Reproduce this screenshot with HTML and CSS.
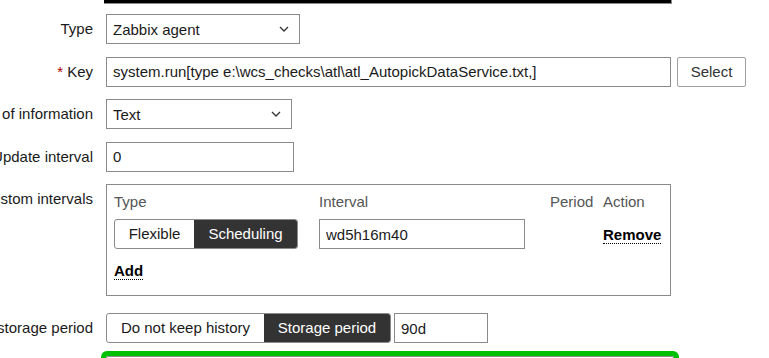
FILE: index.html
```html
<!DOCTYPE html>
<html lang="en">
<head>
    <meta charset="UTF-8">
    <meta name="viewport" content="width=device-width, initial-scale=1.0">
    <title>Item</title>
    <link rel="stylesheet" href="styles.css">
</head>
<body>
    <div class="top-bar"></div>

    <form class="item-form">
        <div class="form-row">
            <label class="form-label">Type</label>
            <div class="select select-type">
                <span>Zabbix agent</span>
                <svg class="chevron" width="10" height="6" viewBox="0 0 10 6"><polyline points="1,1 5,5 9,1" fill="none" stroke="#333" stroke-width="1.3"/></svg>
            </div>
        </div>

        <div class="form-row">
            <label class="form-label"><span class="required">*</span>&nbsp;Key</label>
            <input type="text" class="text-input key-input" value="system.run[type e:\wcs_checks\atl\atl_AutopickDataService.txt,]">
            <button type="button" class="btn-alt">Select</button>
        </div>

        <div class="form-row">
            <label class="form-label">Type of information</label>
            <div class="select select-info">
                <span>Text</span>
                <svg class="chevron" width="10" height="6" viewBox="0 0 10 6"><polyline points="1,1 5,5 9,1" fill="none" stroke="#333" stroke-width="1.3"/></svg>
            </div>
        </div>

        <div class="form-row">
            <label class="form-label">Update interval</label>
            <input type="text" class="text-input delay-input" value="0">
        </div>

        <div class="form-row">
            <label class="form-label">Custom intervals</label>
            <div class="intervals-box">
                <div class="intervals-grid">
                    <div class="col-head">Type</div>
                    <div class="col-head">Interval</div>
                    <div class="col-head">Period</div>
                    <div class="col-head">Action</div>

                    <div class="radio-seg">
                        <span class="seg seg-flex">Flexible</span>
                        <span class="seg seg-sched checked">Scheduling</span>
                    </div>
                    <input type="text" class="text-input interval-input" value="wd5h16m40">
                    <div></div>
                    <div class="cell-action"><a class="link-action">Remove</a></div>
                </div>
                <div class="add-row"><a class="link-action">Add</a></div>
            </div>
        </div>

        <div class="form-row storage-row">
            <label class="form-label">History storage period</label>
            <div class="radio-seg">
                <span class="seg seg-nokeep">Do not keep history</span>
                <span class="seg seg-period checked">Storage period</span>
            </div>
            <input type="text" class="text-input history-input" value="90d">
        </div>
    </form>

    <div class="focused-box"></div>
</body>
</html>
```

FILE: styles.css
```css
body {
    margin: 0;
    font-family: "Liberation Sans", Arial, sans-serif;
    font-size: 15px;
    color: #1a1a1a;
    background-color: #fff;
    overflow: hidden;
    height: 358px;
}

.top-bar {
    margin-left: 104px;
    width: 567px;
    height: 3px;
    background-color: #000;
    border-bottom: 1px solid #8a8a8a;
    border-right: 1px solid #8a8a8a;
}

.item-form {
    margin-top: 10px;
}

.form-row {
    display: flex;
    align-items: flex-start;
    margin-bottom: 12.5px;
}

.form-label {
    flex: 0 0 93px;
    width: 93px;
    min-width: 0;
    margin-right: 13px;
    display: flex;
    justify-content: flex-end;
    white-space: nowrap;
    height: 30px;
    line-height: 30px;
}

.required {
    color: #a00;
}

.select,
.text-input {
    box-sizing: border-box;
    height: 30px;
    border: 1px solid #8a8a8a;
    background-color: #fff;
    font-family: inherit;
    font-size: 15px;
    color: #1a1a1a;
}

.select {
    display: flex;
    align-items: center;
    justify-content: space-between;
    padding: 0 10px 0 6px;
}

.chevron {
    display: block;
}

.select-type {
    width: 194px;
}

.select-info {
    width: 186px;
}

.text-input {
    padding: 0 6px;
    outline: none;
}

.key-input {
    width: 565px;
}

.delay-input {
    width: 188px;
}

.btn-alt {
    box-sizing: border-box;
    height: 30px;
    width: 69px;
    margin-left: 6px;
    background-color: #fff;
    border: 1px solid #a0a0a0;
    border-radius: 2px;
    color: #333;
    font-family: inherit;
    font-size: 15px;
}

.intervals-box {
    box-sizing: border-box;
    width: 565px;
    height: 112px;
    border: 1px solid #8a8a8a;
    padding: 8px 7px 0 7px;
}

.intervals-grid {
    display: grid;
    grid-template-columns: 205px 231px 53px auto;
    row-gap: 8px;
    align-items: center;
}

.col-head {
    line-height: 18px;
    color: #555;
}

.radio-seg {
    display: flex;
    box-sizing: border-box;
    height: 30px;
    border: 1px solid #8a8a8a;
    border-radius: 3px;
    overflow: hidden;
    justify-self: start;
}

.seg {
    line-height: 28px;
    text-align: center;
    color: #1a1a1a;
}

.seg.checked {
    background-color: #333;
    color: #fff;
}

.seg-flex {
    width: 79px;
}

.seg-sched {
    width: 103px;
}

.seg-nokeep {
    width: 157px;
}

.seg-period {
    width: 126px;
}

.interval-input {
    width: 206px;
}

.link-action {
    font-weight: bold;
    color: #000;
    border-bottom: 1px dotted #000;
    cursor: pointer;
}

.add-row {
    margin-top: 13px;
    line-height: 18px;
}

.storage-row {
    margin-top: 17px;
}

.history-input {
    width: 94px;
    margin-left: 3px;
}

.focused-box {
    margin-left: 106px;
    width: 566px;
    height: 20px;
    border: 1px solid #8a8a8a;
    border-radius: 2px;
    box-shadow: 0 0 0 5px #00c000;
}
```
